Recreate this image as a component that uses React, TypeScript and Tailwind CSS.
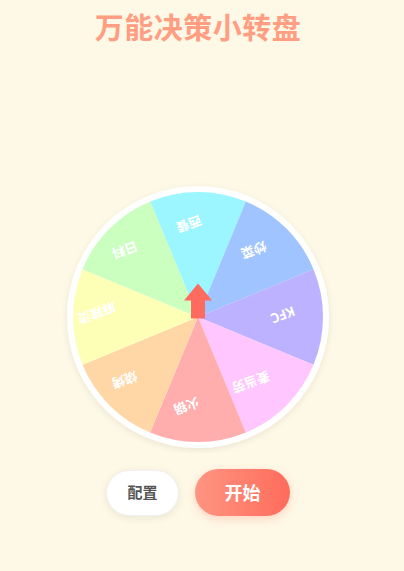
import React from "react";

const items = [
  { name: "西餐", color: "#9BF6FF", pos: [-9, -92.5] },
  { name: "炒菜", color: "#A0C4FF", pos: [56, -66.5] },
  { name: "KFC", color: "#BDB2FF", pos: [85, -1.5] },
  { name: "麦当劳", color: "#FFC6FF", pos: [53, 65.5] },
  { name: "火锅", color: "#FFADAD", pos: [-11, 89.5] },
  { name: "烧烤", color: "#FFD6A5", pos: [-73, 63.5] },
  { name: "麻辣烫", color: "#FDFFB6", pos: [-101, -3.5] },
  { name: "日料", color: "#CAFFBF", pos: [-73, -66.5] },
];

const C = 136;
const R = 125;

function pt(deg: number, r: number) {
  const a = (deg * Math.PI) / 180;
  return [C + r * Math.sin(a), C - r * Math.cos(a)];
}

function wedge(i: number) {
  const s = i * 45 - 22.5;
  const e = i * 45 + 22.5;
  const [x1, y1] = pt(s, R);
  const [x2, y2] = pt(e, R);
  return `M ${C} ${C} L ${x1} ${y1} A ${R} ${R} 0 0 1 ${x2} ${y2} Z`;
}

export default function App() {
  return (
    <div
      className="w-[404px] h-[571px] bg-[#FEF8E6] flex flex-col items-center overflow-hidden pr-[8px]"
      style={{ fontFamily: '"Noto Sans CJK SC", "Noto Sans", sans-serif' }}
    >
      <h1 className="mt-[8px] text-[29px] leading-[36px] font-bold text-[#FF9E82] tracking-[0.5px]">
        万能决策小转盘
      </h1>
      <svg
        width={272}
        height={272}
        viewBox="0 0 272 272"
        className="mt-[137px]"
      >
        <defs>
          <filter id="sh" x="-20%" y="-20%" width="140%" height="140%">
            <feDropShadow dx="0" dy="2" stdDeviation="3" floodColor="#000" floodOpacity="0.08" />
          </filter>
        </defs>
        <circle cx={C} cy={C} r={131} fill="#ffffff" filter="url(#sh)" />
        {items.map((it, i) => (
          <path key={it.name} d={wedge(i)} fill={it.color} />
        ))}
        {items.map((it) => (
          <text
            key={"t" + it.name}
            x={0}
            y={0}
            transform={`translate(${C + it.pos[0]} ${C + it.pos[1]}) rotate(160)`}
            textAnchor="middle"
            dominantBaseline="central"
            fill="#ffffff"
            fontSize={13}
            fontWeight={700}
            style={{ fontFamily: '"Noto Sans CJK SC", "Noto Sans", sans-serif' }}
          >
            {it.name}
          </text>
        ))}
        <path
          d={`M ${C} ${C - 33.5} L ${C + 14} ${C - 16.5} L ${C + 7} ${C - 16.5} L ${C + 7} ${C + 1.5} L ${C - 7} ${C + 1.5} L ${C - 7} ${C - 16.5} L ${C - 14} ${C - 16.5} Z`}
          fill="#FF6B5E"
        />
      </svg>
      <div className="mt-[16px] flex gap-4 items-center">
        <button className="w-[73px] h-[46px] rounded-full bg-white text-[15px] font-bold text-[#555555] shadow-[0_2px_8px_rgba(0,0,0,0.08)] border border-[#f0f0f0]">
          配置
        </button>
        <button className="w-[95px] h-[47px] rounded-full bg-gradient-to-r from-[#FF9482] to-[#FF6B5B] text-[18px] font-bold text-white shadow-[0_3px_8px_rgba(255,107,91,0.25)]">
          开始
        </button>
      </div>
    </div>
  );
}
